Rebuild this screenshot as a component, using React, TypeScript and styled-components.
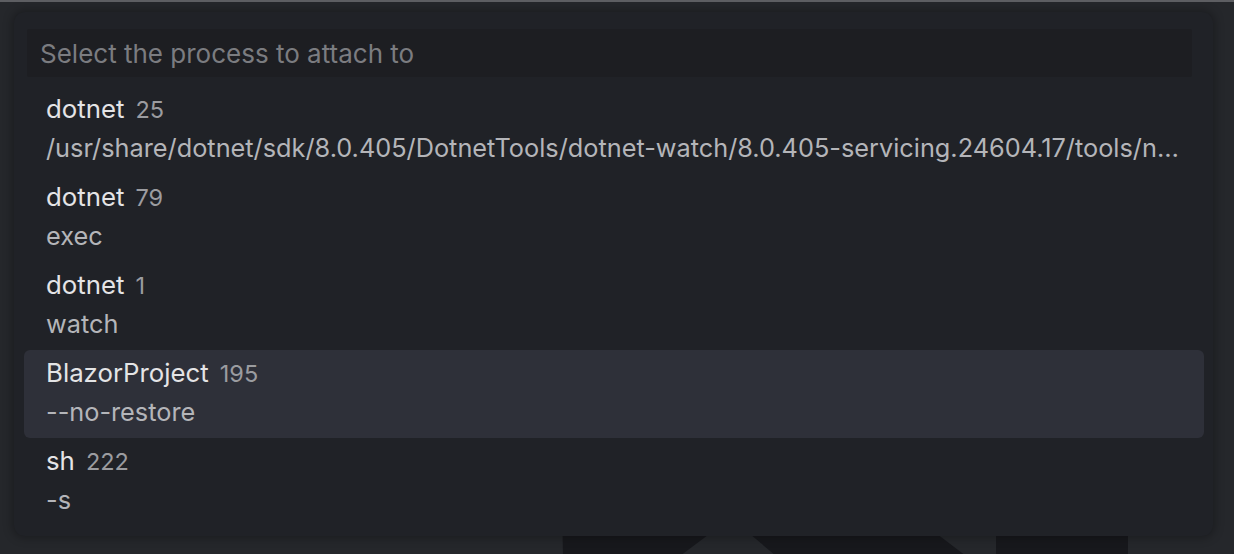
import React from 'react'
import styled, { createGlobalStyle } from 'styled-components'

const GlobalStyle = createGlobalStyle`
  html, body {
    margin: 0;
    padding: 0;
    background: #25272b;
  }
  body {
    font-family: Inter, "Noto Sans", "Liberation Sans", sans-serif;
  }
`

const Screen = styled.div`
  position: relative;
  width: 1234px;
  height: 554px;
  box-sizing: border-box;
  border-top: 2px solid #5d5e62;
  background: #25272b;
  overflow: hidden;
  padding: 10px 0 0 14px;
`

const Watermark = styled.svg`
  position: absolute;
  left: 0;
  top: 0;
  pointer-events: none;
`

const Panel = styled.div`
  position: relative;
  width: 1199px;
  height: 524px;
  box-sizing: border-box;
  background: #202227;
  border-radius: 11px;
  box-shadow: 0 0 10px 2px rgba(0, 0, 0, 0.28);
  padding: 17px 9px 10px 10px;
  display: flex;
  flex-direction: column;
  gap: 9px;
`

const SearchInput = styled.input`
  margin-left: 3px;
  width: 1165px;
  height: 48px;
  box-sizing: border-box;
  border: none;
  outline: none;
  background: #1d1e22;
  color: #d8d8d8;
  font-family: inherit;
  font-size: 26px;
  padding: 0 13px;
  border-radius: 2px;

  &::placeholder {
    color: #7b7c80;
  }
`

const List = styled.div`
  display: flex;
  flex-direction: column;
`

const Row = styled.div<{ active?: boolean }>`
  height: 88px;
  box-sizing: border-box;
  padding: 4px 22px 8px;
  border-radius: 6px;
  background: ${(p) => (p.active ? '#2e3039' : 'transparent')};
  display: flex;
  flex-direction: column;
  min-width: 0;
`

const TitleLine = styled.div`
  display: flex;
  align-items: baseline;
  gap: 11px;
  line-height: 38px;
`

const Name = styled.span`
  font-size: 25.8px;
  color: #e4e4e6;
`

const Pid = styled.span`
  font-size: 23.5px;
  color: #9b9ca0;
`

const Detail = styled.div`
  font-size: 25.3px;
  line-height: 38px;
  color: #b4b5b9;
  white-space: nowrap;
  overflow: hidden;
  text-overflow: ellipsis;
`

const processes = [
  {
    name: 'dotnet',
    pid: 25,
    detail: '/usr/share/dotnet/sdk/8.0.405/DotnetTools/dotnet-watch/8.0.405-servicing.24604.17/tools/net8.0/any/dotnet-watch.dll',
  },
  { name: 'dotnet', pid: 79, detail: 'exec' },
  { name: 'dotnet', pid: 1, detail: 'watch' },
  { name: 'BlazorProject', pid: 195, detail: '--no-restore', active: true },
  { name: 'sh', pid: 222, detail: '-s' },
]

const App = () => {
  return (
    <>
      <GlobalStyle />
      <Screen>
        <Watermark width="1234" height="554" viewBox="0 0 1234 554">
          <path d="M562 500 L752 500 L680 554 L563 554 Z" fill="#17181c" />
          <path d="M712 500 L895 500 L966 554 L776 554 Z" fill="#17181c" />
          <rect x="996" y="500" width="132" height="54" fill="#17181c" />
        </Watermark>
        <Panel>
          <SearchInput placeholder="Select the process to attach to" />
          <List>
            {processes.map((p) => (
              <Row key={p.pid} active={p.active}>
                <TitleLine>
                  <Name>{p.name}</Name>
                  <Pid>{p.pid}</Pid>
                </TitleLine>
                <Detail>{p.detail}</Detail>
              </Row>
            ))}
          </List>
        </Panel>
      </Screen>
    </>
  )
}

export default App
